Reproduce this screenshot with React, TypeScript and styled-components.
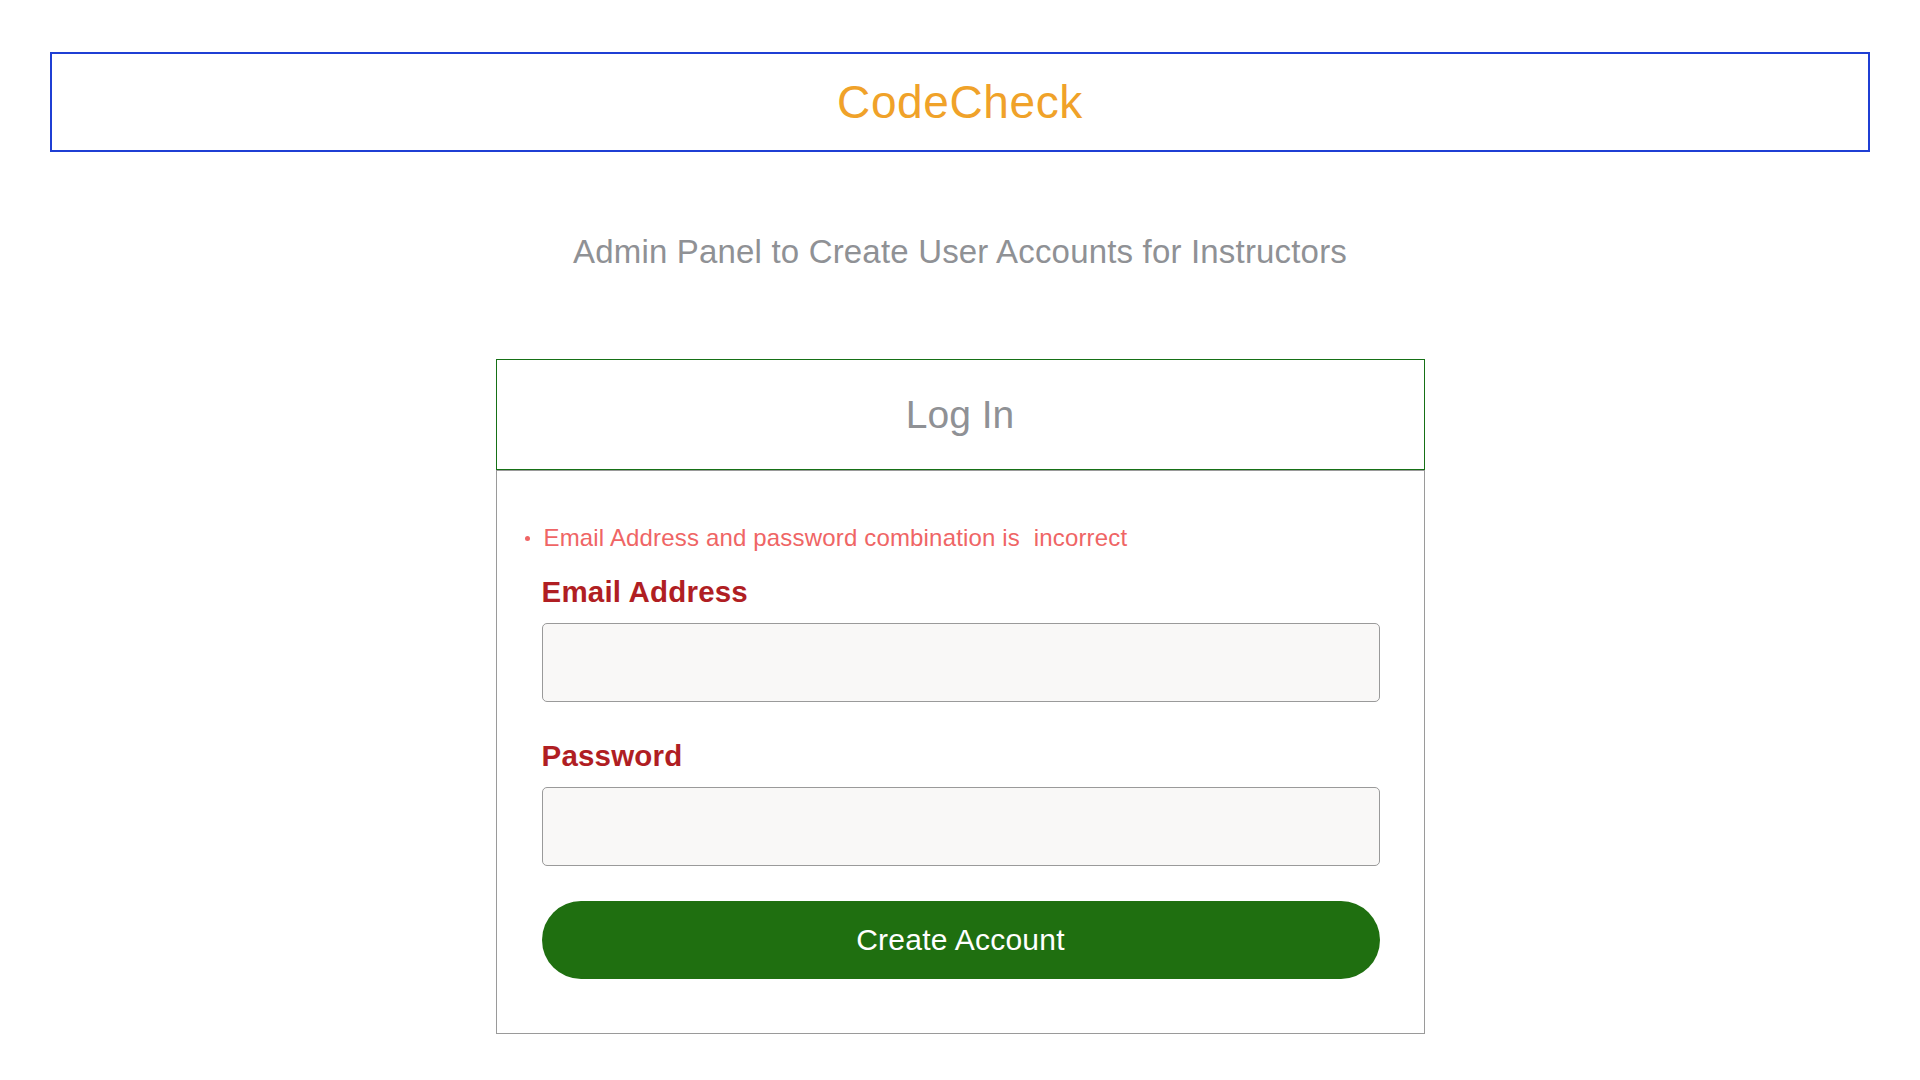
import React from "react";
import styled, { createGlobalStyle } from "styled-components";

const Global = createGlobalStyle`
  html, body { margin: 0; padding: 0; background: #ffffff; }
  body { font-family: "Liberation Sans", Arial, Helvetica, sans-serif; }
  * { box-sizing: border-box; }
`;

const Page = styled.div`
  padding: 52px 50px 0 50px;
  display: flex;
  flex-direction: column;
  align-items: stretch;
`;

const Banner = styled.header`
  height: 100px;
  border: 2px solid #1f3fd4;
  display: flex;
  align-items: center;
  justify-content: center;
`;

const Brand = styled.h1`
  margin: 0;
  font-size: 46px;
  font-weight: 400;
  line-height: 1;
  color: #f0a229;
  letter-spacing: 0.6px;
`;

const Subtitle = styled.p`
  margin: 80px 0 0 0;
  text-align: center;
  font-size: 33px;
  line-height: 40px;
  color: #8f9195;
  letter-spacing: 0.18px;
`;

const Card = styled.section`
  width: 929px;
  margin: 87px auto 0 auto;
  display: flex;
  flex-direction: column;
`;

const CardHeader = styled.div`
  height: 111px;
  border: 1px solid #167016;
  display: flex;
  align-items: center;
  justify-content: center;
`;

const CardTitle = styled.h2`
  margin: 0;
  font-size: 39px;
  font-weight: 400;
  color: #8f9195;
`;

const CardBody = styled.form`
  border: 1px solid #9a9a9a;
  padding: 52px 44px 54px 45px;
  display: flex;
  flex-direction: column;
`;

const ErrorList = styled.ul`
  list-style: none;
  margin: 0 0 21px -17px;
  padding: 0;
`;

const ErrorItem = styled.li`
  display: flex;
  align-items: center;
  gap: 14px;
  font-size: 24px;
  line-height: 30px;
  color: #ef6565;
  letter-spacing: 0.17px;
`;

const Dot = styled.span`
  width: 5px;
  height: 5px;
  border-radius: 50%;
  background: #ef6565;
  flex: none;
`;

const Label = styled.label<{ $gap?: number }>`
  display: block;
  margin-top: ${(p) => p.$gap ?? 0}px;
  font-size: 29.5px;
  line-height: 36px;
  font-weight: 700;
  color: #b01e23;
  letter-spacing: 0.2px;
`;

const Input = styled.input`
  display: block;
  width: 100%;
  height: 79px;
  margin-top: 13px;
  background: #f9f8f7;
  border: 1px solid #9a9a9a;
  border-radius: 5px;
  font-size: 24px;
  padding: 0 16px;
  outline: none;
`;

const Submit = styled.button`
  margin-top: 35px;
  height: 78px;
  width: 100%;
  border: none;
  border-radius: 40px;
  background: #1f6f10;
  color: #ffffff;
  font-family: "Liberation Sans", Arial, sans-serif;
  font-size: 30px;
  letter-spacing: 0.25px;
  cursor: pointer;
`;

export default function App() {
  return (
    <>
      <Global />
      <Page>
        <Banner>
          <Brand>CodeCheck</Brand>
        </Banner>
        <Subtitle>Admin Panel to Create User Accounts for Instructors</Subtitle>
        <Card>
          <CardHeader>
            <CardTitle>Log In</CardTitle>
          </CardHeader>
          <CardBody onSubmit={(e) => e.preventDefault()}>
            <ErrorList>
              <ErrorItem>
                <Dot />
                <span>Email Address and password combination is&nbsp; incorrect</span>
              </ErrorItem>
            </ErrorList>
            <Label htmlFor="email">Email Address</Label>
            <Input id="email" type="email" />
            <Label htmlFor="password" $gap={36}>Password</Label>
            <Input id="password" type="password" />
            <Submit type="submit">Create Account</Submit>
          </CardBody>
        </Card>
      </Page>
    </>
  );
}
